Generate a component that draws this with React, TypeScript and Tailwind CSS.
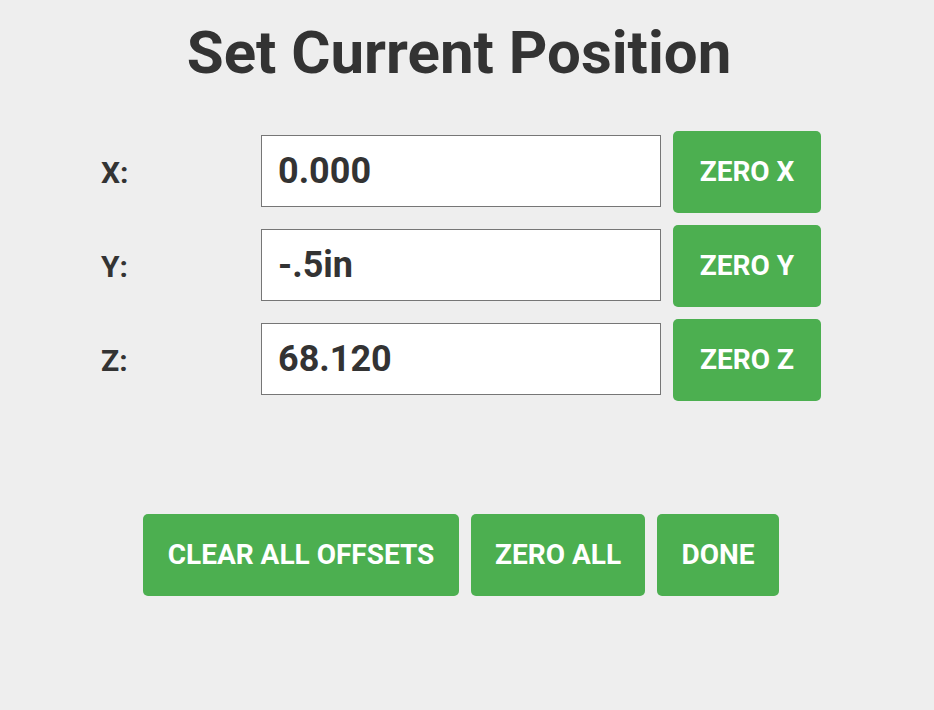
import React from "react";

const rows = [
  { label: "X:", value: "0.000", btn: "ZERO X" },
  { label: "Y:", value: "-.5in", btn: "ZERO Y" },
  { label: "Z:", value: "68.120", btn: "ZERO Z" },
];

export default function App() {
  return (
    <div
      className="w-[934px] h-[710px] bg-[#eeeeee] text-[#333333] overflow-hidden"
      style={{ fontFamily: "Roboto, 'Liberation Sans', sans-serif" }}
    >
      <h1 className="pt-[23px] pr-4 text-center text-[60px] leading-[60px] font-bold">
        Set Current Position
      </h1>
      <div className="mx-auto mt-[48px] w-[732px] flex flex-col gap-3">
        {rows.map((r) => (
          <div key={r.label} className="flex items-start h-[82px]">
            <div className="w-[160px] self-center text-[30px] font-bold">{r.label}</div>
            <div className="mt-[4px] w-[400px] h-[72px] bg-white border border-[#767676] flex items-center pl-4 text-[36px] font-bold">
              {r.value}
            </div>
            <button className="ml-3 w-[148px] h-[82px] rounded-[5px] bg-[#4caf50] text-white text-[28px] font-bold">
              {r.btn}
            </button>
          </div>
        ))}
      </div>
      <div className="mt-[113px] flex justify-center gap-3 pr-3">
        <button className="w-[316px] h-[82px] rounded-[5px] bg-[#4caf50] text-white text-[28px] font-bold">
          CLEAR ALL OFFSETS
        </button>
        <button className="w-[174px] h-[82px] rounded-[5px] bg-[#4caf50] text-white text-[28px] font-bold">
          ZERO ALL
        </button>
        <button className="w-[122px] h-[82px] rounded-[5px] bg-[#4caf50] text-white text-[28px] font-bold">
          DONE
        </button>
      </div>
    </div>
  );
}
